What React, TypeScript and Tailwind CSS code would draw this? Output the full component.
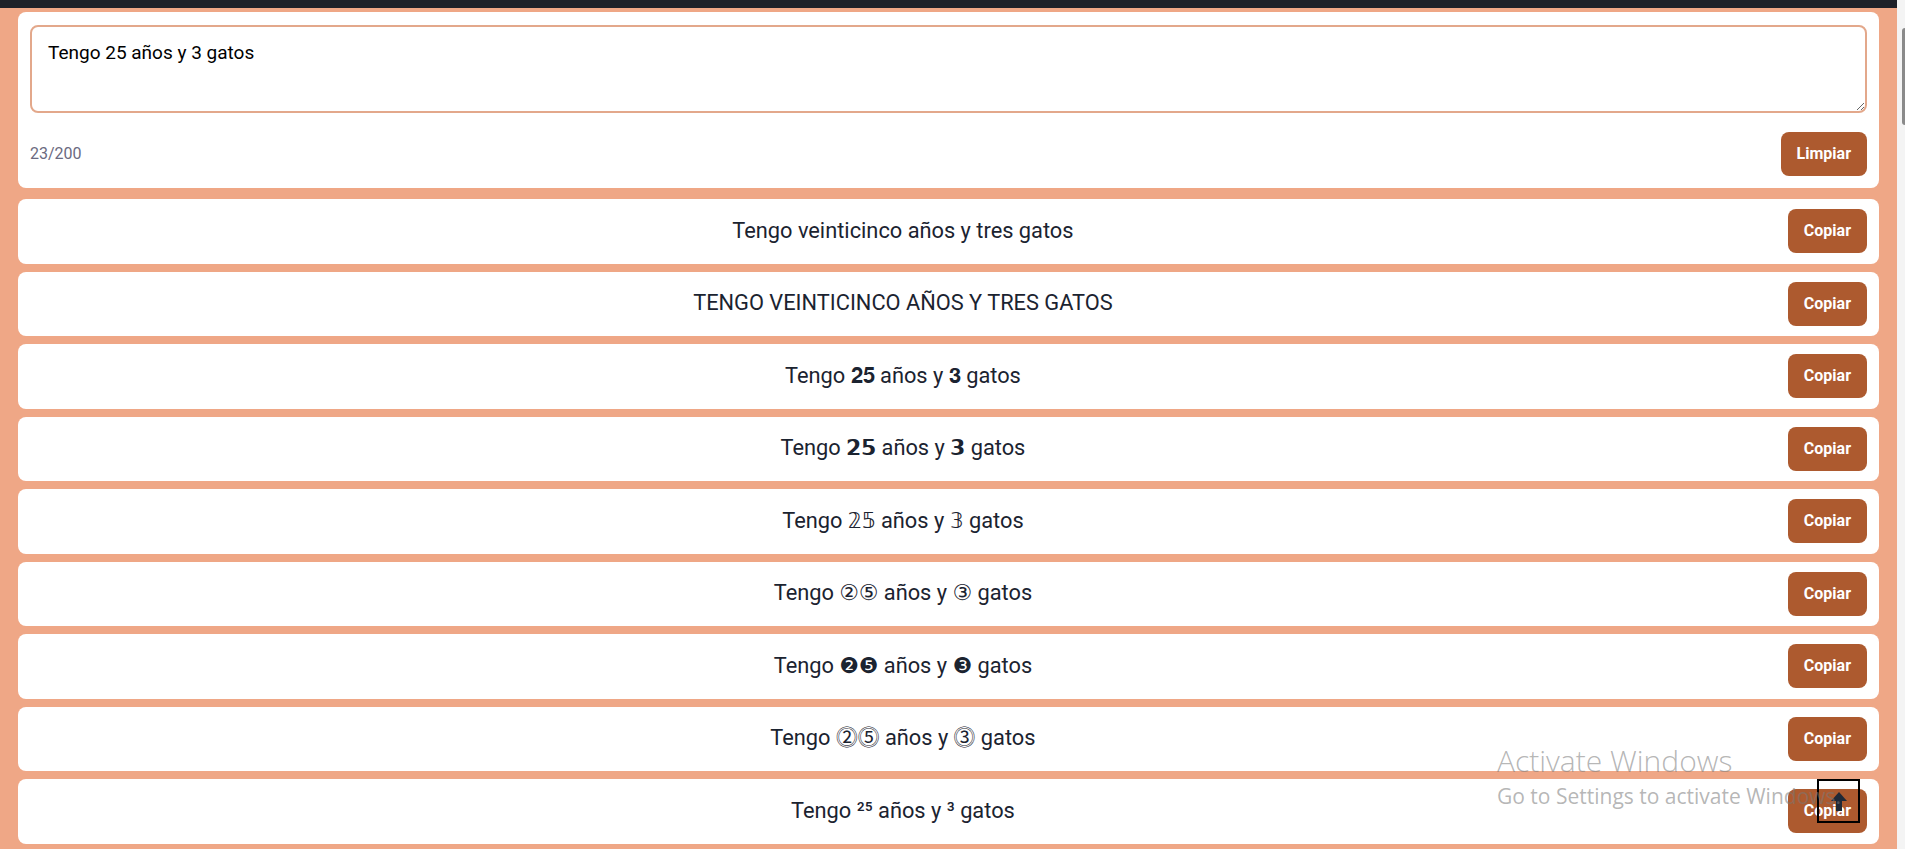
import React, { useState } from 'react';

const transforms: { text: string; serif?: boolean }[] = [
  { text: 'Tengo veinticinco años y tres gatos' },
  { text: 'TENGO VEINTICINCO AÑOS Y TRES GATOS' },
  { text: 'Tengo 𝟐𝟓 años y 𝟑 gatos', serif: true },
  { text: 'Tengo 𝟮𝟱 años y 𝟯 gatos' },
  { text: 'Tengo 𝟚𝟝 años y 𝟛 gatos' },
  { text: 'Tengo ②⑤ años y ③ gatos' },
  { text: 'Tengo ❷❺ años y ❸ gatos' },
  { text: 'Tengo ⓶⓹ años y ⓷ gatos' },
  { text: 'Tengo ²⁵ años y ³ gatos' },
];

const ResultRow: React.FC<{ text: string; serif?: boolean }> = ({ text, serif }) => (
  <div className="flex h-[64.5px] items-center gap-3 rounded-lg bg-white px-3">
    <p
      className={
        serif
          ? "flex-1 text-center font-['Roboto','DejaVu_Serif','DejaVu_Sans',serif] text-[21.8px] text-[#1b2330]"
          : 'flex-1 text-center text-[21.8px] text-[#1b2330]'
      }
    >
      {text}
    </p>
    <button className="rounded-lg bg-[#ad5a2f] px-4 py-2.5 text-base font-bold text-white">
      Copiar
    </button>
  </div>
);

export default function App() {
  const [value, setValue] = useState('Tengo 25 años y 3 gatos');

  return (
    <div className="relative flex h-[849px] overflow-hidden font-['Roboto','DejaVu_Sans','Noto_Sans_CJK_JP',sans-serif]">
      <div className="flex flex-1 flex-col bg-[#efa786]">
        {/* bottom of the nav bar */}
        <div className="h-2 bg-[#1e2128]" />

        <div className="px-[18px] pt-1">
          {/* input card */}
          <div className="rounded-lg bg-white pb-3 pl-3 pr-3 pt-[13px]">
            <textarea
              value={value}
              onChange={(e) => setValue(e.target.value)}
              maxLength={200}
              className="block h-[88px] w-full rounded-lg border-2 border-[#e3a88b] px-4 py-3 text-[19px] text-black outline-none"
            />
            <div className="mt-[19px] flex items-center justify-between">
              <span className="text-base text-[#6b6a80]">{value.length}/200</span>
              <button
                onClick={() => setValue('')}
                className="rounded-lg bg-[#ad5a2f] px-4 py-2.5 text-base font-bold text-white"
              >
                Limpiar
              </button>
            </div>
          </div>

          {/* results */}
          <div className="mt-[11px] flex flex-col gap-2">
            {transforms.map((t) => (
              <ResultRow key={t.text} text={t.text} serif={t.serif} />
            ))}
          </div>
        </div>
      </div>

      {/* page scrollbar */}
      <div className="w-2 bg-[#f4f4f4]">
        <div className="ml-[5px] mt-[28px] h-[97px] rounded-l-full bg-[#8a8a8a]" />
      </div>

      {/* scroll to top */}
      <button className="absolute left-[1817px] top-[779px] flex h-[44px] w-[43px] items-center justify-center border-2 border-black">
        <svg width="16" height="19" viewBox="0 0 16 19" fill="#1f2937">
          <polygon points="0,9 8,0 16,9" />
          <rect x="5" y="8" width="6" height="11" />
        </svg>
      </button>

      {/* OS watermark */}
      <div className="pointer-events-none absolute left-[1497px] top-[746px] font-['Open_Sans',sans-serif] leading-none text-[rgba(120,120,120,0.55)]">
        <div className="text-[30px] font-light">Activate Windows</div>
        <div className="mt-[10px] text-[21px]">Go to Settings to activate Windows.</div>
      </div>
    </div>
  );
}
